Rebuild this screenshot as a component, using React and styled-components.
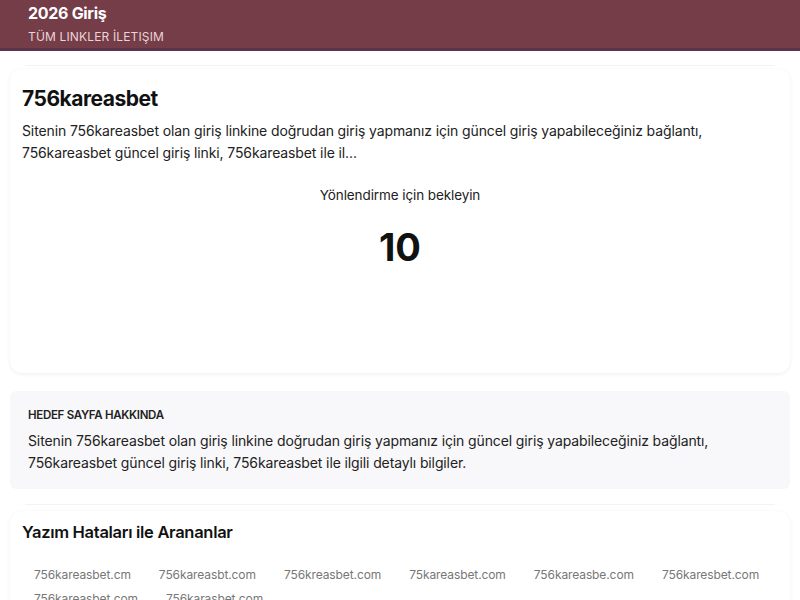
import React from 'react';
import styled, { createGlobalStyle } from 'styled-components';

const Global = createGlobalStyle`
  body {
    margin: 0;
    background: #fff;
    font-family: Inter, "Noto Sans", sans-serif;
    color: #1a1a1a;
  }
`;

const Header = styled.header`
  background: #743d48;
  border-bottom: 3px solid #5b3350;
  padding: 2px 28px 2px;
  height: 44px;
  display: flex;
  flex-direction: column;
  justify-content: space-between;
`;

const Brand = styled.div`
  color: #fff;
  font-size: 16px;
  font-weight: 700;
  line-height: 22px;
  letter-spacing: -0.3px;
`;

const Nav = styled.nav`
  color: #ecd3d8;
  font-size: 12px;
  line-height: 18px;
  letter-spacing: 0.15px;
`;

const Main = styled.main`
  padding: 0 10px;
`;

const Divider = styled.div`
  height: 1px;
  margin: ${p => p.$top || 14}px 15px ${p => p.$bottom || 3}px;
  background: #f3f3f5;
`;

const Card = styled.section`
  background: #fff;
  border-radius: 12px;
  box-shadow: 0 1px 4px rgba(0, 0, 0, 0.07);
  padding: ${p => p.$top || 12}px 12px ${p => p.$bottom || 12}px;
`;

const Title = styled.h1`
  margin: 0 0 6px;
  font-size: 21px;
  line-height: 30px;
  font-weight: 700;
  letter-spacing: -0.5px;
  color: #111;
`;

const Text = styled.p`
  margin: 0;
  font-size: 14px;
  line-height: 22px;
  letter-spacing: -0.12px;
  color: #222;
`;

const Wait = styled.div`
  text-align: center;
  margin-top: 20px;
  font-size: 13.5px;
  line-height: 22px;
  letter-spacing: -0.1px;
  color: #222;
`;

const Count = styled.div`
  text-align: center;
  margin-top: 19px;
  font-size: 38px;
  line-height: 44px;
  font-weight: 700;
  color: #111;
`;

const About = styled.section`
  margin-top: 18px;
  background: #f8f8fa;
  border-radius: 6px;
  padding: 16px 18px 15px;
`;

const Label = styled.h2`
  margin: 0 0 7px;
  font-size: 11.5px;
  line-height: 16px;
  font-weight: 600;
  letter-spacing: -0.3px;
  text-transform: uppercase;
  color: #222;
`;

const SubTitle = styled.h2`
  margin: 0 0 22px;
  font-size: 16.5px;
  line-height: 24px;
  font-weight: 600;
  letter-spacing: -0.3px;
  color: #111;
`;

const Links = styled.div`
  display: flex;
  flex-wrap: wrap;
  column-gap: 28px;
  row-gap: 6px;
  padding-left: 12px;
`;

const Link = styled.a`
  font-size: 12px;
  line-height: 18px;
  letter-spacing: -0.1px;
  color: #777;
  text-decoration: none;
`;

const desc =
  'Sitenin 756kareasbet olan giriş linkine doğrudan giriş yapmanız için güncel giriş yapabileceğiniz bağlantı, 756kareasbet güncel giriş linki, 756kareasbet ile ilgili detaylı bilgiler.';

const typos = [
  '756kareasbet.cm',
  '756kareasbt.com',
  '756kreasbet.com',
  '75kareasbet.com',
  '756kareasbe.com',
  '756karesbet.com',
  '756kareasbet.com',
  '756karasbet.com',
];

export default function App() {
  return (
    <>
      <Global />
      <Header>
        <Brand>2026 Giriş</Brand>
        <Nav>TÜM LINKLER İLETIŞIM</Nav>
      </Header>
      <Main>
        <Divider />
        <Card $top={15} $bottom={104}>
          <Title>756kareasbet</Title>
          <Text>
            Sitenin 756kareasbet olan giriş linkine doğrudan giriş yapmanız için güncel giriş yapabileceğiniz bağlantı,
            756kareasbet güncel giriş linki, 756kareasbet ile il...
          </Text>
          <Wait>Yönlendirme için bekleyin</Wait>
          <Count>10</Count>
        </Card>
        <About>
          <Label>Hedef Sayfa Hakkında</Label>
          <Text>{desc}</Text>
        </About>
        <Divider $top={15} $bottom={6} />
        <Card $top={9}>
          <SubTitle>Yazım Hataları ile Arananlar</SubTitle>
          <Links>
            {typos.map(t => (
              <Link key={t} href="#">{t}</Link>
            ))}
          </Links>
        </Card>
      </Main>
    </>
  );
}
